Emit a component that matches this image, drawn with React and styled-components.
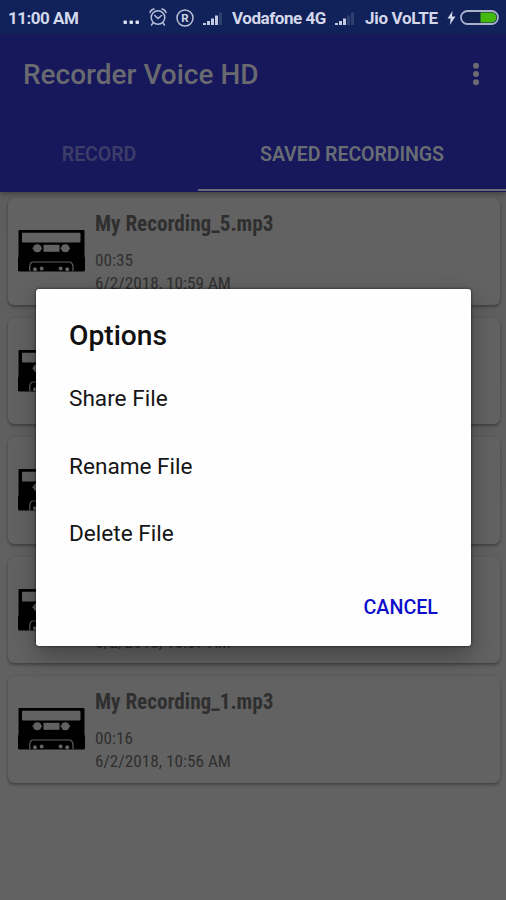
import React from "react";
import styled, { createGlobalStyle } from "styled-components";

const GlobalStyle = createGlobalStyle`
* {
    box-sizing: border-box;
}
body {
    margin: 0;
    font-family: Roboto, "Liberation Sans", sans-serif;
}
`;

const Screen = styled.div`
position: relative;
width: 506px;
height: 900px;
overflow: hidden;
background: linear-gradient(#5c5c5c, #616161 75%, #626262);
`;

const StatusBar = styled.div`
height: 34px;
display: flex;
align-items: center;
padding: 2px 7px 0 8px;
background-color: #11215a;
color: #d3d8ea;
`;

const StatusText = styled.span`
font-size: 17px;
line-height: 20px;
font-weight: 700;
white-space: nowrap;
width: ${(props) => props.$width}px;
margin-right: ${(props) => props.$gap}px;
letter-spacing: ${(props) => props.$spacing || 0}px;
`;

const StatusIcon = styled.svg`
display: block;
flex: none;
margin-right: ${(props) => props.$gap || 0}px;
`;

const AppBar = styled.header`
height: 157.5px;
display: flex;
flex-direction: column;
background-color: #17175b;
box-shadow: 0 2px 5px rgba(0, 0, 0, 0.3);
`;

const Toolbar = styled.div`
height: 82px;
display: flex;
align-items: center;
justify-content: space-between;
padding: 0 25px 0 23px;
`;

const AppTitle = styled.h1`
margin: 0;
font-size: 28px;
line-height: 32px;
font-weight: 500;
color: #686a70;
`;

const MenuDots = styled.svg`
display: block;
margin-top: -2px;
`;

const Tabs = styled.div`
display: grid;
grid-template-columns: 198px 308px;
height: 75px;
`;

const Tab = styled.div`
display: flex;
align-items: center;
justify-content: center;
padding-top: 3px;
font-size: 19.6px;
font-weight: 600;
letter-spacing: -0.1px;
color: ${(props) => (props.$active ? "#686c73" : "#3d3d69")};
border-bottom: 2.5px solid ${(props) => (props.$active ? "#6c6c70" : "transparent")};
`;

const List = styled.main`
display: flex;
flex-direction: column;
gap: 13px;
padding: 6.5px 6px 0 8px;
`;

const Card = styled.article`
height: 106.5px;
display: flex;
border-radius: 6px;
background-color: #626262;
box-shadow: 0 2px 3px rgba(0, 0, 0, 0.3), 0 0 2px rgba(0, 0, 0, 0.1);
padding: 13px 10px 0;
`;

const CardText = styled.div`
margin-left: 10px;
font-family: "Roboto Condensed", Roboto, sans-serif;
font-stretch: 75%;
color: #2f2f2f;
`;

const FileName = styled.h2`
margin: 0;
min-height: 26px;
font-size: 21.2px;
line-height: 26px;
font-weight: 700;
`;

const Meta = styled.p`
margin: ${(props) => props.$top || 0}px 0 0;
min-height: 23px;
font-size: 17.2px;
line-height: 23px;
`;

const CassetteIcon = styled.svg`
display: block;
flex: none;
margin-top: 19px;
`;

const DialogLayer = styled.div`
position: absolute;
inset: 0;
display: flex;
align-items: flex-start;
padding: 289px 35px 0 36px;
`;

const Dialog = styled.section`
width: 435.5px;
height: 356.5px;
display: flex;
flex-direction: column;
padding: 31px 33px 0;
border-radius: 3px;
background-color: #fefefe;
box-shadow: 0 0 3px rgba(0, 0, 0, 0.7), 0 10px 24px rgba(0, 0, 0, 0.3);
`;

const DialogTitle = styled.h2`
margin: 0 0 13px;
font-size: 28.2px;
line-height: 32px;
font-weight: 500;
color: #111;
`;

const Option = styled.div`
height: 67.5px;
line-height: 67.5px;
font-size: 22.6px;
color: #161616;
`;

const Actions = styled.div`
display: flex;
justify-content: flex-end;
margin-top: 28px;
`;

const Button = styled.button`
border: 0;
padding: 0;
background: none;
font-family: inherit;
font-size: 19.7px;
line-height: 24px;
font-weight: 500;
color: #0d0dcb;
`;

const recordings = [
    { id: 5, name: "My Recording_5.mp3", length: "00:35", date: "6/2/2018, 10:59 AM" },
    { id: 4 },
    { id: 3 },
    { id: 2, date: "6/2/2018, 10:57 AM" },
    { id: 1, name: "My Recording_1.mp3", length: "00:16", date: "6/2/2018, 10:56 AM" },
];

const options = ["Share File", "Rename File", "Delete File"];

const Cassette = () => (
    <CassetteIcon width="67" height="42" viewBox="0 0 67 42">
        <path d="M1 0H65.500Q66.500 0 66.500 1V26L67 28V40Q67 41.500 65.500 41.500H1.500Q0 41.500 0 40V28L.5 26V1Q.5 0 1 0Z" fill="#000" />
        <path d="M11.800 41V36Q12.500 32 15 32H51.500Q54 32 55 36V41" fill="none" stroke="#606060" strokeWidth="1.200" />
        <rect x="4" y="2.800" width="58.500" height="9.800" rx="1" fill="#626262" />
        <rect x="25.500" y="14.800" width="16" height="7" fill="#626262" />
        <circle cx="19.300" cy="18.300" r="4" fill="#626262" />
        <circle cx="47.300" cy="18.300" r="4" fill="#626262" />
        <path d="M14.500 18.300H24M42.500 18.300H52" stroke="#626262" strokeWidth="1.500" />
        <g fill="#626262">
            <circle cx="17" cy="39.300" r="2" />
            <circle cx="23.700" cy="38.500" r="2" />
            <circle cx="42.600" cy="38.500" r="2" />
            <circle cx="49.200" cy="39.300" r="2" />
        </g>
    </CassetteIcon>
);

const Signal = ({ level, gap }) => (
    <StatusIcon width="20" height="14" viewBox="0 0 20 14" $gap={gap}>
        {[2, 4, 6.5, 9.5, 12.5].map((h, i) => (
            <rect key={i} x={i * 4} y={14 - h} width="3" height={h} fill={i < level ? "#c3cadf" : "#2d4170"} />
        ))}
    </StatusIcon>
);

const App = () => {
    return (
        <Screen>
            <GlobalStyle />
            <StatusBar>
                <StatusText $width={70} $gap={45} $spacing={-0.5}>11:00 AM</StatusText>
                <StatusIcon width="17" height="18" viewBox="0 0 17 18" $gap={9}>
                    <g fill="#dde2f0">
                        <rect x="0.500" y="11.500" width="3.500" height="3.500" rx="1" />
                        <rect x="6.500" y="11.500" width="3.500" height="3.500" rx="1" />
                        <rect x="12.500" y="11.500" width="3.500" height="3.500" rx="1" />
                    </g>
                </StatusIcon>
                <StatusIcon width="18" height="20" viewBox="0 0 18 20" $gap={9}>
                    <g fill="none" stroke="#b9c1da" strokeWidth="1.500" strokeLinecap="round">
                        <circle cx="9" cy="9.500" r="6.800" />
                        <path d="M5.800 7.500L9 10.500L12.500 7.500M1 4.500Q2 1.500 5 1M17 4.500Q16 1.500 13 1M4 15L2.500 17M14 15L15.500 17" />
                    </g>
                </StatusIcon>
                <StatusIcon width="18" height="18" viewBox="0 0 18 18" $gap={9}>
                    <circle cx="9" cy="9" r="8" fill="none" stroke="#b9c1da" strokeWidth="1.500" />
                    <text x="9" y="13" textAnchor="middle" fontSize="11.500" fontWeight="700" fill="#cdd3e6">R</text>
                </StatusIcon>
                <Signal level={4} gap={9} />
                <StatusText $width={94} $gap={9} $spacing={-0.45}>Vodafone 4G</StatusText>
                <Signal level={3} gap={10} />
                <StatusText $width={73} $gap={9} $spacing={-0.3}>Jio VoLTE</StatusText>
                <StatusIcon width="9" height="14" viewBox="0 0 9 14" $gap={4}>
                    <path d="M5.500 0L0.500 7.500H3.700L2.800 14L8.500 5.500H5Z" fill="#d3d8ea" />
                </StatusIcon>
                <StatusIcon width="39" height="16" viewBox="0 0 39 16">
                    <rect x="1" y="1" width="37" height="13" rx="6.500" fill="#10204f" stroke="#a9b1cd" strokeWidth="1.800" />
                    <path d="M20.500 2.500H31.500A5 5 0 0 1 31.500 12.500H20.500Z" fill="#43b80e" />
                </StatusIcon>
            </StatusBar>
            <AppBar>
                <Toolbar>
                    <AppTitle>Recorder Voice HD</AppTitle>
                    <MenuDots width="10" height="26" viewBox="0 0 10 26" fill="#6a6c72">
                        <circle cx="5" cy="4.700" r="3" />
                        <circle cx="5" cy="13" r="3" />
                        <circle cx="5" cy="21.300" r="3" />
                    </MenuDots>
                </Toolbar>
                <Tabs>
                    <Tab>RECORD</Tab>
                    <Tab $active>SAVED RECORDINGS</Tab>
                </Tabs>
            </AppBar>
            <List>
                {recordings.map((item) => (
                    <Card key={item.id}>
                        <Cassette />
                        <CardText>
                            <FileName>{item.name}</FileName>
                            <Meta $top={12}>{item.length}</Meta>
                            <Meta>{item.date}</Meta>
                        </CardText>
                    </Card>
                ))}
            </List>
            <DialogLayer>
                <Dialog>
                    <DialogTitle>Options</DialogTitle>
                    {options.map((label) => (
                        <Option key={label}>{label}</Option>
                    ))}
                    <Actions>
                        <Button>CANCEL</Button>
                    </Actions>
                </Dialog>
            </DialogLayer>
        </Screen>
    );
};

export default App;
